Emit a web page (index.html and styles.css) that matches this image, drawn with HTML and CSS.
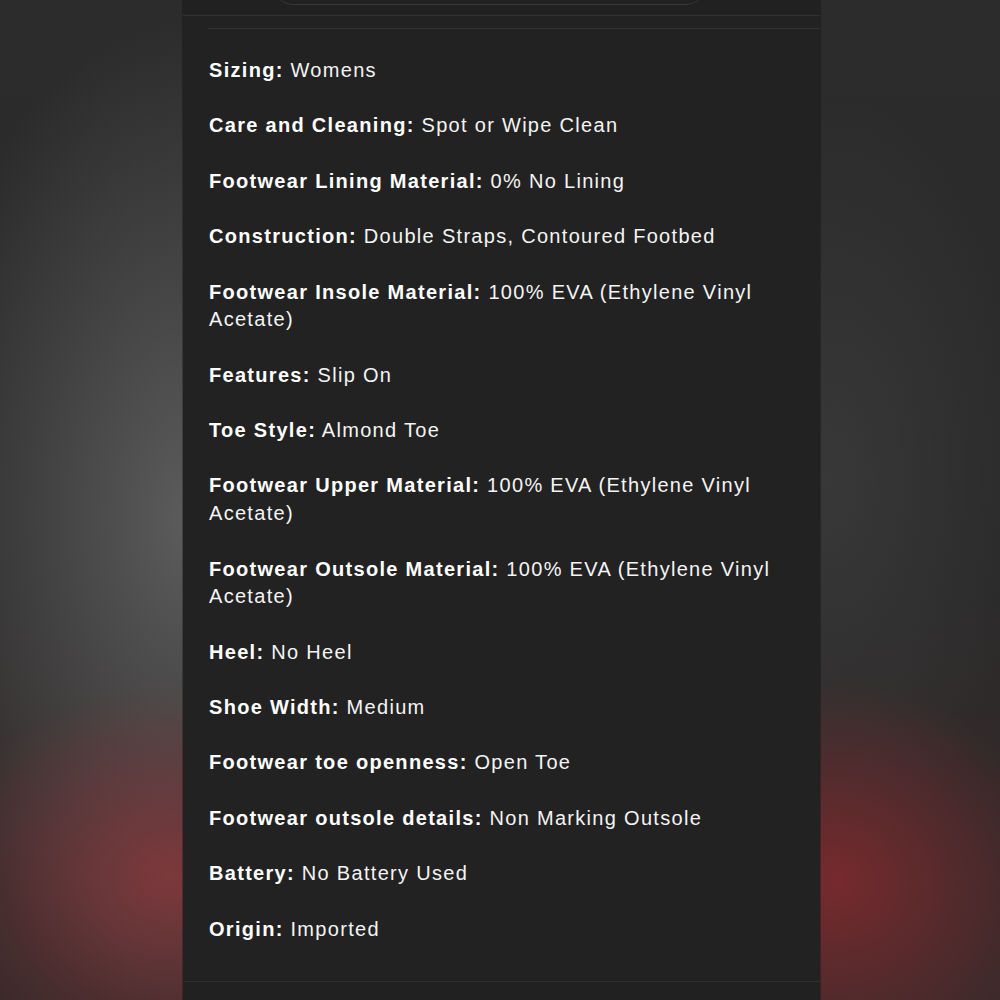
FILE: index.html
```html
<!DOCTYPE html>
<html lang="en">
<head>
<meta charset="utf-8">
<title>Product details</title>
<link rel="stylesheet" href="styles.css">
</head>
<body>
<div class="backdrop">
  <main class="panel">
    <div class="panel-head">
      <div class="pill"></div>
    </div>
    <section class="details">
      <ul class="spec-list">
        <li><b>Sizing:</b> Womens</li>
        <li><b>Care and Cleaning:</b> Spot or Wipe Clean</li>
        <li><b>Footwear Lining Material:</b> 0% No Lining</li>
        <li><b>Construction:</b> Double Straps, Contoured Footbed</li>
        <li><b>Footwear Insole Material:</b> 100% EVA (Ethylene Vinyl Acetate)</li>
        <li><b>Features:</b> Slip On</li>
        <li><b>Toe Style:</b> Almond Toe</li>
        <li><b>Footwear Upper Material:</b> 100% EVA (Ethylene Vinyl Acetate)</li>
        <li><b>Footwear Outsole Material:</b> 100% EVA (Ethylene Vinyl Acetate)</li>
        <li><b>Heel:</b> No Heel</li>
        <li><b>Shoe Width:</b> Medium</li>
        <li><b>Footwear toe openness:</b> Open Toe</li>
        <li><b>Footwear outsole details:</b> Non Marking Outsole</li>
        <li><b>Battery:</b> No Battery Used</li>
        <li><b>Origin:</b> Imported</li>
      </ul>
    </section>
    <div class="panel-foot"></div>
  </main>
</div>
</body>
</html>
```

FILE: styles.css
```css
html, body {
  margin: 0;
  padding: 0;
  height: 100%;
  overflow: hidden;
}

body {
  font-family: "Liberation Sans", Arial, Helvetica, sans-serif;
  background-color: #2b2a2a;
  background-image:
    radial-gradient(ellipse 230px 190px at 170px 875px, rgba(128, 56, 60, 0.95), rgba(128, 56, 60, 0) 100%),
    radial-gradient(ellipse 220px 200px at 835px 880px, rgba(122, 42, 46, 0.95), rgba(122, 42, 46, 0) 100%),
    radial-gradient(ellipse 280px 500px at 190px 520px, rgba(92, 92, 92, 1), rgba(92, 92, 92, 0) 100%),
    radial-gradient(ellipse 200px 380px at 830px 480px, rgba(56, 56, 56, 1), rgba(56, 56, 56, 0) 100%),
    linear-gradient(180deg, #2d2c2c 0%, #2b2a2a 60%, #3a2a2a 100%);
}

.backdrop {
  height: 100%;
  display: flex;
  justify-content: flex-start;
  padding-left: 183px;
  box-sizing: border-box;
}

.panel {
  width: 637px;
  height: 100%;
  background: #222222;
  display: flex;
  flex-direction: column;
  box-shadow: -1px 0 0 rgba(0, 0, 0, 0.25), 1px 0 0 rgba(0, 0, 0, 0.25);
}

.panel-head {
  height: 15px;
  border-bottom: 1px solid #323232;
  background: #212121;
  display: flex;
  justify-content: flex-start;
  padding-left: 90px;
  overflow: hidden;
}

.pill {
  width: 433px;
  height: 40px;
  margin-top: -35px;
  border: 1.5px solid #363636;
  border-radius: 22px;
  box-sizing: border-box;
  flex: none;
}

.details {
  margin-top: 12px;
  margin-left: 25px;
  border-top: 1px solid #333333;
  padding: 28px 26px 38px 1px;
  flex: none;
}

.spec-list {
  list-style: none;
  margin: 0;
  padding: 0;
  color: #f4f4f4;
  font-size: 20px;
  line-height: 27.7px;
  letter-spacing: 1.3px;
  display: flex;
  flex-direction: column;
  gap: 27.7px;
}

.spec-list li {
  margin: 0;
}

.spec-list b {
  font-weight: 700;
  color: #ffffff;
}

.panel-foot {
  border-top: 1px solid #2f2f2f;
  background: #212121;
  flex: 1;
}
```
